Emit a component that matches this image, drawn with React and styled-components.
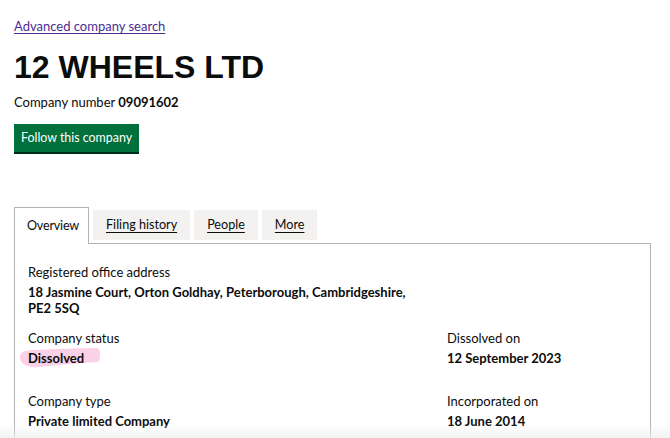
import React from "react";
import styled, { createGlobalStyle } from "styled-components";

const Global = createGlobalStyle`
  *, *::before, *::after { box-sizing: border-box; }
  html, body { margin: 0; padding: 0; background: #fff; }
  body { font-family: Lato, "Noto Sans", sans-serif; color: #0b0c0c; overflow: hidden; }
`;

const Page = styled.div`
  padding: 15px 19px 0 14px;
`;

const BackLink = styled.a`
  display: inline-block;
  font-size: 13px;
  line-height: 20px;
  color: #4c2c92;
  text-decoration: underline;
  text-underline-offset: 2px;
`;

const Title = styled.h1`
  margin: 13px 0 0;
  font-family: "Liberation Sans", Arial, sans-serif;
  font-weight: 700;
  font-size: 32px;
  line-height: 36px;
`;

const Meta = styled.p`
  margin: 7px 0 0;
  font-size: 13px;
  line-height: 20px;
  strong { font-weight: 700; }
`;

const FollowButton = styled.button`
  display: block;
  margin-top: 12px;
  height: 28px;
  padding: 0 7px;
  border: 0;
  border-radius: 0;
  background: #00703c;
  box-shadow: 0 2px 0 #002d18;
  color: #fff;
  font-family: inherit;
  font-size: 12.4px;
  line-height: 28px;
`;

const Tabs = styled.div`
  display: flex;
  align-items: flex-start;
  gap: 4px;
  height: 36px;
  margin-top: 55px;
`;

const Tab = styled.a`
  display: block;
  font-size: 12.6px;
  color: #0b0c0c;
  padding: 0 13px;
  ${(p) =>
    p.$active
      ? `
    height: 37px;
    line-height: 35px;
    padding: 0 9px 0 12px;
    background: #fff;
    border: 1px solid #b1b4b6;
    border-bottom: 0;
    position: relative;
    z-index: 1;
    text-decoration: none;
    letter-spacing: -0.2px;
  `
      : `
    margin-top: 3px;
    height: 30px;
    line-height: 30px;
    background: #f3f2f1;
    text-decoration: underline;
    text-underline-offset: 3px;
  `}
`;

const Panel = styled.section`
  border: 1px solid #b1b4b6;
  border-bottom: 0;
  padding: 18px 13px 40px;
  min-height: 220px;
`;

const Label = styled.div`
  font-size: 13px;
  line-height: 20px;
`;

const Value = styled.div`
  font-size: 13px;
  font-weight: 700;
  line-height: 16px;
  margin-top: 2px;
  max-width: ${(p) => p.$max || "none"};
`;

const Row = styled.div`
  display: grid;
  grid-template-columns: 419px 1fr;
  margin-top: ${(p) => p.$gap || 0}px;
`;

const Highlighted = styled.span`
  position: relative;
  z-index: 0;
  display: inline-block;
`;

const Marker = styled.svg`
  position: absolute;
  left: -11px;
  top: -5px;
  width: 84px;
  height: 25px;
  z-index: -1;
  pointer-events: none;
`;

const BottomFade = styled.div`
  position: fixed;
  left: 0;
  right: 0;
  bottom: 0;
  height: 14px;
  background: linear-gradient(to bottom, rgba(240, 240, 240, 0), rgba(238, 238, 238, 0.7));
  pointer-events: none;
`;

export default function App() {
  return (
    <>
      <Global />
      <Page>
        <BackLink href="#">Advanced company search</BackLink>
        <Title>12 WHEELS LTD</Title>
        <Meta>
          Company number <strong>09091602</strong>
        </Meta>
        <FollowButton>Follow this company</FollowButton>
        <Tabs>
          <Tab $active>Overview</Tab>
          <Tab href="#">Filing history</Tab>
          <Tab href="#">People</Tab>
          <Tab href="#">More</Tab>
        </Tabs>
        <Panel>
          <Label>Registered office address</Label>
          <Value $max="395px">
            18 Jasmine Court, Orton Goldhay, Peterborough, Cambridgeshire, PE2 5SQ
          </Value>
          <Row $gap={12}>
            <div>
              <Label>Company status</Label>
              <Value>
                <Highlighted>
                  <Marker viewBox="0 0 84 25">
                    <path
                      d="M3 12 C3 6, 9 5, 18 5 C40 4, 62 3, 80 3 C84 3, 84 17, 80 17 C60 18, 42 20, 22 22 C10 23, 3 19, 3 12 Z"
                      fill="#fbd1e8"
                    />
                  </Marker>
                  Dissolved
                </Highlighted>
              </Value>
            </div>
            <div>
              <Label>Dissolved on</Label>
              <Value>12 September 2023</Value>
            </div>
          </Row>
          <Row $gap={25}>
            <div>
              <Label>Company type</Label>
              <Value>Private limited Company</Value>
            </div>
            <div>
              <Label>Incorporated on</Label>
              <Value>18 June 2014</Value>
            </div>
          </Row>
        </Panel>
      </Page>
      <BottomFade />
    </>
  );
}
